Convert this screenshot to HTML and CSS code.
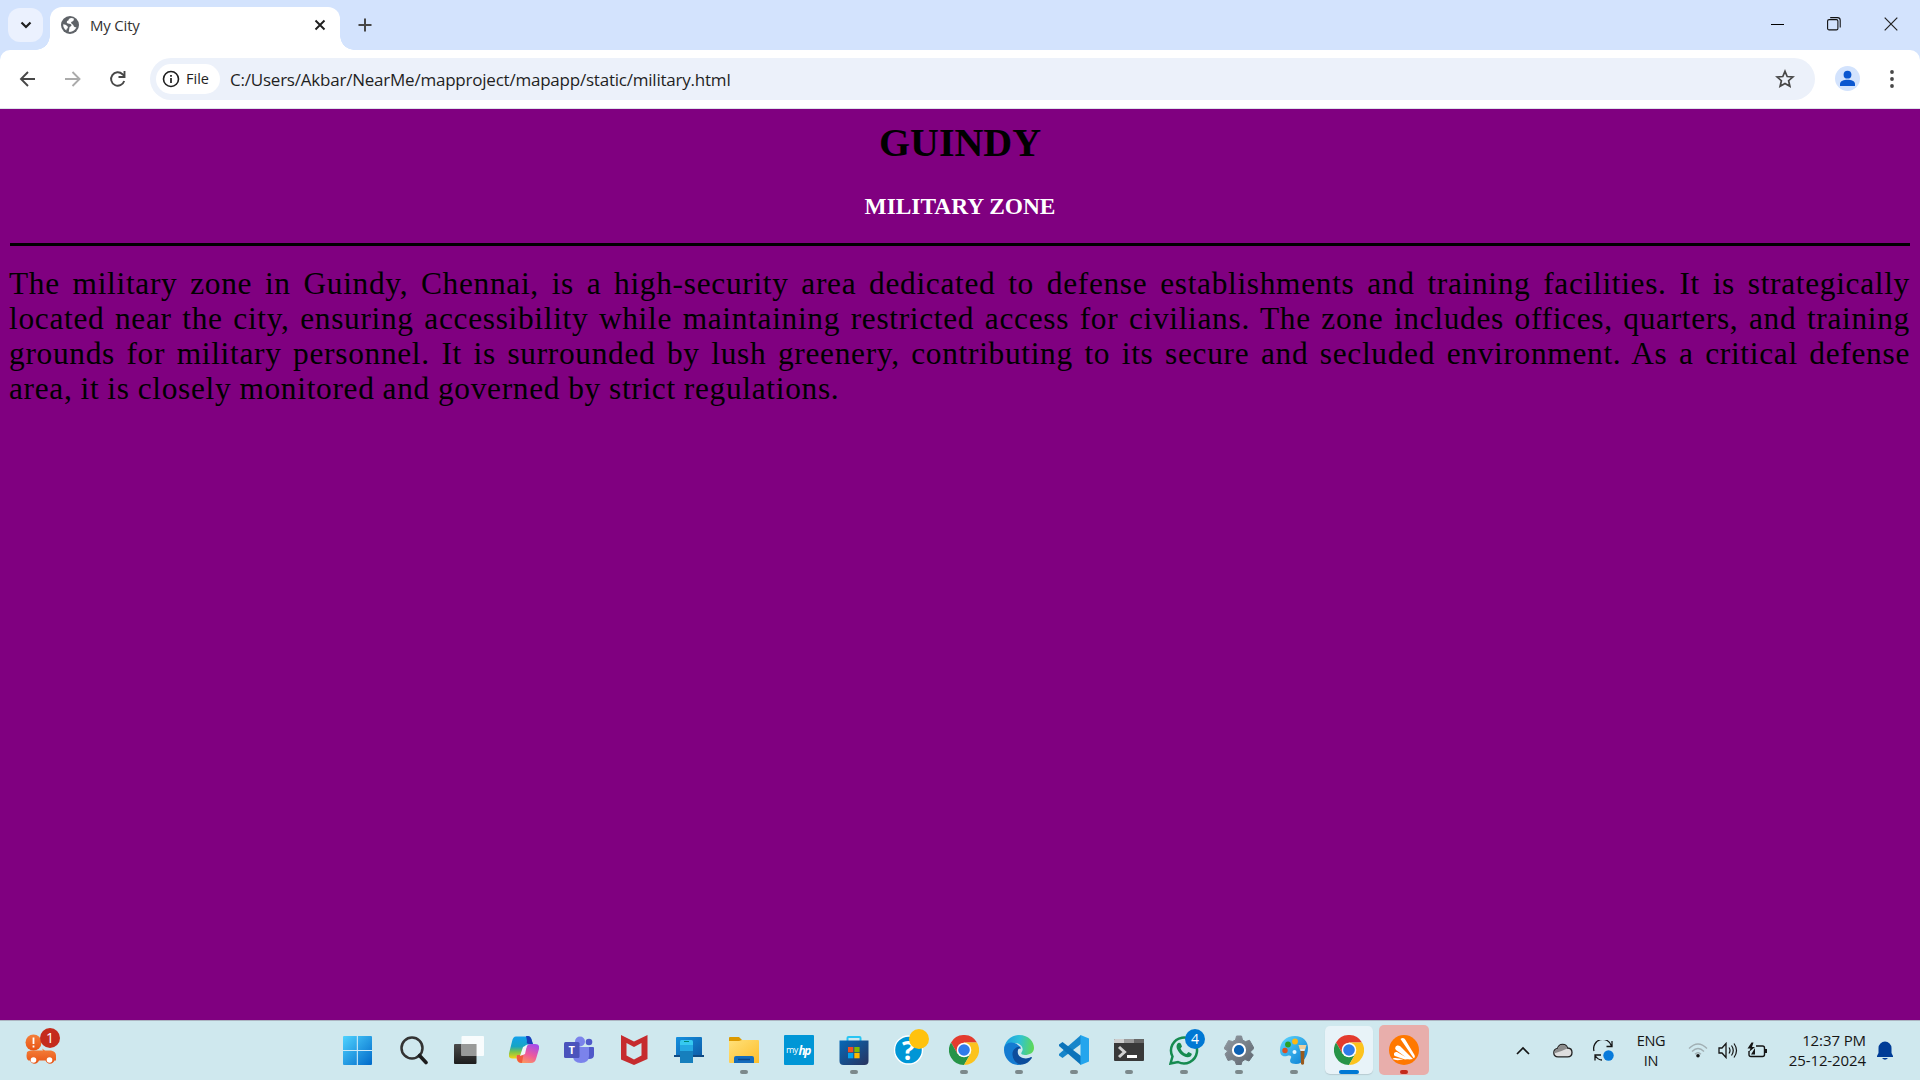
FILE: index.html
```
<!DOCTYPE html>
<html lang="en">
<head>
<meta charset="utf-8">
<title>My City</title>
<link rel="stylesheet" href="styles.css">
</head>
<body>
<svg class="defs" width="0" height="0" aria-hidden="true">
  <defs>
    <linearGradient id="win" x1="0" y1="0" x2="1" y2="1"><stop offset="0" stop-color="#4fd3ff"/><stop offset="1" stop-color="#0069c9"/></linearGradient>
    <linearGradient id="dark" x1="0" y1="0" x2="0" y2="1"><stop offset="0" stop-color="#4b4b4b"/><stop offset="1" stop-color="#1d1d1d"/></linearGradient>
    <linearGradient id="copA" x1="0" y1="0" x2="0" y2="1"><stop offset="0" stop-color="#12a0ec"/><stop offset=".45" stop-color="#16a4c4"/><stop offset=".7" stop-color="#7bc34b"/><stop offset="1" stop-color="#f5d414"/></linearGradient>
    <linearGradient id="copB" x1=".7" y1="0" x2=".2" y2="1"><stop offset="0" stop-color="#a64ce8"/><stop offset=".5" stop-color="#ee5a9c"/><stop offset="1" stop-color="#fda057"/></linearGradient>
    <linearGradient id="folder" x1="0" y1="0" x2="1" y2="1"><stop offset="0" stop-color="#ffe17a"/><stop offset="1" stop-color="#fdbe2b"/></linearGradient>
    <linearGradient id="blue" x1="0" y1="0" x2="1" y2="1"><stop offset="0" stop-color="#1490df"/><stop offset="1" stop-color="#0d5ba6"/></linearGradient>
    <linearGradient id="store" x1="0" y1="0" x2="1" y2="1"><stop offset="0" stop-color="#0669b8"/><stop offset="1" stop-color="#29335e"/></linearGradient>
    <linearGradient id="edgeTop" x1="0" y1=".4" x2="1" y2=".5"><stop offset="0" stop-color="#1b9de2"/><stop offset=".5" stop-color="#2fc2d5"/><stop offset="1" stop-color="#5fd953"/></linearGradient>
    <linearGradient id="paint" x1="0" y1="0" x2="1" y2="1"><stop offset="0" stop-color="#5dd8ff"/><stop offset="1" stop-color="#087bd1"/></linearGradient>
    <linearGradient id="gear" x1="0" y1="0" x2="1" y2="1"><stop offset="0" stop-color="#939ba3"/><stop offset="1" stop-color="#5d656e"/></linearGradient>
    <linearGradient id="car" x1="0" y1="0" x2="0" y2="1"><stop offset="0" stop-color="#f4803b"/><stop offset="1" stop-color="#e85414"/></linearGradient>
    <symbol id="chrome" viewBox="0 0 30 30">
      <path d="M2 7.500A15 15 0 0 1 28 7.500H15L8.500 18.750Z" fill="#e33b2e"/>
      <path d="M2 7.500A15 15 0 0 0 15 30L21.500 18.750H8.500Z" fill="#269447"/>
      <path d="M28 7.500A15 15 0 0 1 15 30L21.500 18.750 15 7.500Z" fill="#fcc31e"/>
      <circle cx="15" cy="15" r="7.300" fill="#fff"/><circle cx="15" cy="15" r="5.800" fill="#2f7bea"/>
    </symbol>
  </defs>
</svg>

<header class="browser">
  <div class="tabstrip">
    <button class="tab-search" aria-label="Search tabs"><svg width="14" height="14" viewBox="0 0 14 14"><path d="M2.500 4.500 7 9l4.500-4.500" fill="none" stroke="#1f1f1f" stroke-width="2.200"/></svg></button>
    <div class="tab">
      <svg width="18" height="18" viewBox="0 0 18 18"><circle cx="9" cy="9" r="9" fill="#5f6368"/><path d="M10.500 1.900C8.500 2 7.500 3 7.400 4.500 5.800 4.700 5.500 6 6 7c1 1.100 3.500.4 4.200 1.400.8 1.100-.2 2-1.600 2.600l-.9 4.800c3.400.5 6.700-1.500 7.800-4.700-1.500.6-2.700-.2-3-1.500-.3-1.400-1.800-1.500-2.300-2.600-.5-1.200 1-1.400 1.900-2 .9-.7.800-1.500.6-2.500ZM2.200 8.200c1.500 0 3.300.7 4.300 2 .7 1 .4 2.300-.8 2.500l-.4 1.700C3.200 13.200 2 10.800 2.200 8.200Z" fill="#fff"/></svg>
      <span class="tab-title">My City</span>
      <svg class="tab-close" width="12" height="12" viewBox="0 0 12 12"><path d="M1.500 1.500l9 9m0-9l-9 9" stroke="#1f1f1f" stroke-width="1.900"/></svg>
    </div>
    <svg class="new-tab" width="14" height="14" viewBox="0 0 14 14"><path d="M7 .5v13M.5 7h13" stroke="#474747" stroke-width="2"/></svg>
    <div class="window-controls">
      <svg width="13" height="14" viewBox="0 0 13 14"><path d="M0 7.500h13" stroke="#000"/></svg>
      <svg width="14" height="14" viewBox="0 0 14 14" fill="none" stroke="#111" stroke-width="1.100"><rect x=".6" y="2.600" width="10.300" height="10.300" rx="1.500"/><path d="M3.200.6h7.300q2.700 0 2.700 2.700v7.200"/></svg>
      <svg width="14" height="14" viewBox="0 0 14 14"><path d="M.7.700l12.600 12.600m0-12.600L.7 13.300" stroke="#222" stroke-width="1.200"/></svg>
    </div>
  </div>
  <div class="toolbar">
    <nav class="nav">
      <svg width="18" height="18" viewBox="0 0 18 18"><path d="M16 9H2.500M9 2 2 9l7 7" fill="none" stroke="#474747" stroke-width="1.900"/></svg>
      <svg width="18" height="18" viewBox="0 0 18 18"><path d="M1 9h14M8.500 2l7 7-7 7" fill="none" stroke="#ababab" stroke-width="1.900"/></svg>
      <svg width="18" height="18" viewBox="0 0 18 18"><path d="M15.200 11A6.700 6.700 0 1 1 13.500 4.200L15 5.500M15.500 1v6h-6" fill="none" stroke="#474747" stroke-width="1.900"/></svg>
    </nav>
    <div class="omnibox">
      <div class="chip"><svg width="18" height="18" viewBox="0 0 18 18"><circle cx="9" cy="9" r="7.500" fill="none" stroke="#1f1f1f" stroke-width="1.600"/><path d="M9 8v5M9 5v1.700" stroke="#1f1f1f" stroke-width="1.700"/></svg><span>File</span></div>
      <span class="url">C:/Users/Akbar/NearMe/mapproject/mapapp/static/military.html</span>
      <svg class="star" width="20" height="20" viewBox="0 0 20 20"><path d="M10 2.300l2.200 5.200 5.700.5-4.300 3.700 1.300 5.600L10 14.400l-4.900 2.900 1.300-5.600L2.100 8l5.700-.5Z" fill="none" stroke="#474747" stroke-width="1.700"/></svg>
    </div>
    <svg class="avatar" width="25" height="25" viewBox="0 0 25 25"><circle cx="12.500" cy="12.500" r="12.500" fill="#d3e3fd"/><circle cx="12.500" cy="8.700" r="3.900" fill="#0b57d0"/><path d="M5 20v-2c0-3 4-4.200 7.500-4.200s7.500 1.200 7.500 4.200v2Z" fill="#0b57d0"/></svg>
    <svg class="menu" width="4" height="18" viewBox="0 0 4 18" fill="#474747"><circle cx="2" cy="2" r="1.900"/><circle cx="2" cy="9" r="1.900"/><circle cx="2" cy="16" r="1.900"/></svg>
  </div>
</header>

<main class="page">
  <h1>GUINDY</h1>
  <h3>MILITARY ZONE</h3>
  <hr>
  <p>
    <span class="line">The military zone in Guindy, Chennai, is a high-security area dedicated to defense establishments and training facilities. It is strategically</span>
    <span class="line">located near the city, ensuring accessibility while maintaining restricted access for civilians. The zone includes offices, quarters, and training</span>
    <span class="line">grounds for military personnel. It is surrounded by lush greenery, contributing to its secure and secluded environment. As a critical defense</span>
    <span class="line last">area, it is closely monitored and governed by strict regulations.</span>
  </p>
</main>

<footer class="taskbar">
  <div class="widget">
    <svg width="36" height="38" viewBox="0 0 36 38"><path d="M4 24q1.500-1.500 4-1.500h12l-1-2 3 2h6q5 1 5 5v5h-1.500a4.800 4.800 0 0 1-9 0H16a4.800 4.800 0 0 1-9 0H5.500q-2-1-2-5Z" fill="url(#car)"/><circle cx="10.500" cy="32" r="2.800" fill="#fff"/><circle cx="26.500" cy="32" r="2.800" fill="#fff"/><circle cx="10.500" cy="14.500" r="8" fill="url(#car)"/><path d="M10.500 9.500v6.500M10.500 17.500v2" stroke="#fff" stroke-width="1.800"/></svg>
    <span class="badge red">1</span>
  </div>
  <div class="apps">
    <div class="app start"><svg viewBox="0 0 30 30"><path d="M2 1h13v14H1V2q0-1 1-1ZM15.500 1H29q1 0 1 1v13H15.500ZM1 15.500h14V30H2q-1 0-1-1ZM15.500 15.500H30V29q0 1-1 1H15.500Z" fill="url(#win)"/><path d="M15.300 1v29M1 15.500h29" stroke="#cdeaf8" stroke-width="1"/></svg></div>
    <div class="app"><svg viewBox="0 0 30 30"><circle cx="13" cy="13" r="10.500" fill="none" stroke="#333" stroke-width="2.500"/><path d="m20.500 20.500 6.500 7" stroke="#1c1c1c" stroke-width="3.600" stroke-linecap="round"/></svg></div>
    <div class="app"><svg viewBox="0 0 30 30"><rect x="0" y="9" width="22.500" height="20" rx="1" fill="url(#dark)"/><rect x="7.500" y="1" width="22.500" height="20" rx="1" fill="#fff" fill-opacity=".86"/><path d="M7.500 9h15v12h-15Z" fill="#989a99"/></svg></div>
    <div class="app"><svg viewBox="0 0 30 30"><path d="M7 1.500h12q3 0 4 5l1 3h-5q-3 0-4 4l-2 7q-1 3-4 3H3q-4 0-3-5l3-12q1-5 4-5Z" fill="url(#copA)"/><path d="M17 1h2q3 0 4 5l1 3h-4q-3 0-2-3Z" fill="#183dba"/><path d="M24 9h2q5 0 4 5l-3 10q-1 4-5 4H12q-3 0-4-3l-1-4h4q3 0 4-3l3-7q1-2 4-2Z" fill="url(#copB)"/><path d="M8 20h5q2 0 1 2l-1 6q-4 0-5-4Z" fill="#f15b3d"/><path d="m14 12 4-2-2 9-5 2Z" fill="#eef7fa"/></svg></div>
    <div class="app"><svg viewBox="0 0 30 30"><circle cx="25" cy="7" r="3.300" fill="#5059c9"/><path d="M20 12h9q1 0 1 1v7q0 4-5 4h-4Z" fill="#5059c9"/><circle cx="16" cy="6.500" r="5" fill="#7b83eb"/><path d="M9 12h16v9q0 7-8 7-8 0-8-7Z" fill="#7b83eb"/><rect x="0" y="7" width="15.500" height="16" rx="1.500" fill="#4b53bc"/><text x="7.800" y="19" text-anchor="middle" class="teams-t">T</text></svg></div>
    <div class="app"><svg viewBox="0 0 30 30"><path d="M2 0 15 6.500 28.500 0v24L15 30 2 24.500Z" fill="#c62b2e"/><path d="m7.500 8 7.500 4 7.500-4v12.500L15 24.500l-7.500-4Z" fill="#cfe8ee"/></svg></div>
    <div class="app"><svg viewBox="0 0 30 30"><rect x="2" y="2" width="26" height="20" rx="1" fill="url(#blue)"/><path d="M0 20h30v2H0Z" fill="#104a83"/><rect x="6" y="5" width="13" height="23" rx="1.500" fill="#36c9f0"/><path d="M6 10h13v6H6Z" fill="#24a9e3"/><path d="M6 16h13v12H6Z" fill="#167fbd"/><path d="M10 6.500h5" stroke="#087"/></svg></div>
    <div class="app run"><svg viewBox="0 0 30 30"><path d="M0 3q0-1 1-1h9l3 3v5H0Z" fill="#dc9900"/><path d="M0 6h10l3-1h16q1 0 1 1v22H1q-1 0-1-1Z" fill="url(#folder)"/><path d="M5 28v-5q0-2 2-2h16q2 0 2 2v5Z" fill="#146cbd"/><path d="M9 24.500h12" stroke="#0b4687" stroke-width="1.500"/></svg></div>
    <div class="app"><svg viewBox="0 0 30 30"><rect width="30" height="30" rx="1" fill="#0096d6"/><text x="2" y="18" class="my">my</text><text x="14.500" y="19.500" class="hp">hp</text></svg></div>
    <div class="app run"><svg viewBox="0 0 30 30"><path d="M8.500 8V3q0-1 1-1h11q1 0 1 1v5" fill="none" stroke="#28c5f3" stroke-width="2"/><path d="M.5 5.500h29V26q0 4-4 4h-21q-4 0-4-4Z" fill="url(#store)"/><path d="M9 12h5.300v5.300H9Z" fill="#f25022"/><path d="M15.300 12h5.300v5.300h-5.300Z" fill="#7fba00"/><path d="M9 18h5.300v5.300H9Z" fill="#00a4ef"/><path d="M15.300 18h5.300v5.300h-5.300Z" fill="#ffb900"/></svg></div>
    <div class="app"><svg viewBox="0 0 30 30"><circle cx="14.500" cy="15" r="14" fill="#0096d6" stroke="#fff" stroke-width="1.400"/><text x="14.500" y="25" text-anchor="middle" class="question">?</text></svg><span class="badge yellow"></span></div>
    <div class="app run"><svg><use href="#chrome"/></svg></div>
    <div class="app run"><svg viewBox="0 0 30 30"><path d="M0 16A15 15 0 0 1 15 0C25 0 30 7 30 13c0 5-5 7-9 7-3 0-4.500-1-3.500-2.500C21 13 16 8 10.500 8 5 8 0 12 0 16Z" fill="url(#edgeTop)"/><path d="M0 15C0 9 5 6 10.500 8c3.500 1.400 5.500 3 6.500 6-5-1.500-8 2-7 7 1 4 4 7.500 8 8.500C8 32 0 24 0 15Z" fill="#147bd1"/><path d="M17 12c-5-1-9 3-8.500 8 .4 6 5.500 10 10 9.500 4-.4 7-3 9.200-6.200.7-1-.2-1.500-1.200-1C22 25 12 23 14 15c.5-2 2-2.500 3-3Z" fill="#0c4d9c"/></svg></div>
    <div class="app run"><svg viewBox="0 0 30 30"><path d="M22 0v9L3.500 23 0 20.500v-1.500Z" fill="#1685ca"/><path d="M22 30v-9L3.500 7 0 9.500V11Z" fill="#0b73ba"/><path d="M21.500 0 30 3.500v23L21.500 30Z" fill="#24a5ed"/></svg></div>
    <div class="app run"><svg viewBox="0 0 30 30"><rect y="4" width="30" height="22" rx="1" fill="#393939"/><path d="M0 8V5q0-1 1-1h9v4Z" fill="#cecece"/><path d="M10 4h10v4H10Z" fill="#9a9a9a"/><path d="M20 4h9q1 0 1 1v3H20Z" fill="#666"/><path d="m5 12 5.500 5L5 22" fill="none" stroke="#d1d1d1" stroke-width="3"/><path d="M13 21.500h10" stroke="#fff" stroke-width="3"/></svg></div>
    <div class="app run"><svg viewBox="0 0 30 30"><path d="M1.500 28.500l2-7A13 13 0 1 1 9 27Z" fill="none" stroke="#168b50" stroke-width="2.500"/><path d="M9 8q2-1 3 1l1 2.500-1.500 2c1.500 3 3 4.500 6 5.500l2-2 3 1.500q1 1-1 3c-3 2-7 0-10-2.500C8 15 6 11 9 8Z" fill="#168b50"/></svg><span class="badge blue">4</span></div>
    <div class="app run"><svg viewBox="0 0 30 30"><path d="m11.500 5 1-4h5l1 4 3 1.600 4-1.300 4.500 8-3.700 3.700 3 3-4.300 6-4-1.500-3 2-1 3.500h-4.500l-1.500-4-3-1.500-4 1L1 19l2.700-3L0 13.500 4.500 5.500l4 1Z" fill="url(#gear)" stroke="url(#gear)" stroke-width="1" stroke-linejoin="round"/><circle cx="15" cy="15" r="6.100" fill="#0d61b4" stroke="#fff" stroke-width="2"/></svg></div>
    <div class="app run"><svg viewBox="0 0 30 30"><path d="M16 1c8 0 13 5 13 12 0 8-5 16-12 16-6 0-7-3-5-6 1-2-1-3-4-2-5 1-7-1-7-6C1 7 7 1 16 1Z" fill="url(#paint)"/><circle cx="16" cy="6.500" r="2.900" fill="#fdb813"/><circle cx="9" cy="9.500" r="2.900" fill="#2aa128"/><circle cx="6" cy="15.500" r="2.700" fill="#d95023"/><circle cx="15.500" cy="17" r="2" fill="#e5f7ff"/><path d="M19.500 10h8l-1.500 5h-5Z" fill="#edcf9d"/><path d="M21.300 14h4.400v2h-4.400Z" fill="#e9e9e9"/><path d="M21.500 16h4l-.5 13q-1.500 1.500-3 0Z" fill="#995a1d"/></svg></div>
    <div class="app run active"><svg><use href="#chrome"/></svg></div>
    <div class="app run alert"><svg viewBox="0 0 30 30"><circle cx="15" cy="15" r="15" fill="#ff7800"/><path d="M11.500 4c2-2 4-1 5 1l9 15q1 3-1 3ZM6.500 12c1-2 3-2 5-.5L24 24l-4 .500L7 15q-1.500-1.500-.5-3ZM5 18.500q.5-2 3-1.500l12 7-4 .5-10-3.500q-1.500-.5-1-2.500ZM3.500 24q1-1.500 3-1l8 1.300-4 .7q-4 .5-7-1Z" fill="#fff"/></svg></div>
  </div>
  <div class="tray">
    <svg class="chev" width="14" height="9" viewBox="0 0 14 9"><path d="m1 8 6-6 6 6" fill="none" stroke="#151515" stroke-width="1.700"/></svg>
    <svg class="cloud" width="20" height="15" viewBox="0 0 20 15"><path d="M5 13.800C-.5 13.800-.5 6.500 4.500 5.500 6 0 13 0 14.500 5c6 .2 6 8.800 0 8.800Z" fill="#dedede" stroke="#222" stroke-width="1.300"/><path d="M1.200 10C1 7 3 5.800 4.700 5.700 6 .5 13 .5 14.300 5.500L8.500 8l-6 2Z" fill="#8c8c8c"/></svg>
    <svg class="sync" width="21" height="21" viewBox="0 0 21 21"><path d="M1 11A9 9 0 0 1 18.500 6M19 1v5.500h-5.500M9 20C6 20 4 18.500 2 15.500M2 20.500V15h6" fill="none" stroke="#151515" stroke-width="1.300"/><circle cx="15.500" cy="15.500" r="5.200" fill="#087bdb"/></svg>
    <div class="lang">ENG<br>IN</div>
    <svg class="wifi" width="20" height="15" viewBox="0 0 20 15"><path d="M1 5.500q9-9 18 0M4 8.500q6-6 12 0M7 11.200q3-3 6 0" fill="none" stroke="#a1afb3" stroke-width="1.300"/><circle cx="10" cy="12.700" r="1.800" fill="#151515"/></svg>
    <svg class="sound" width="20" height="17" viewBox="0 0 20 17"><path d="M1 6h3l4-4.500v14L4 11H1Z" fill="none" stroke="#151515" stroke-width="1.300"/><path d="M11 5.500q2 3 0 6M13.500 3.500q3.500 5 0 10M16 1.500q5 7 0 14" fill="none" stroke="#151515" stroke-width="1.200"/></svg>
    <svg class="battery" width="21" height="17" viewBox="0 0 21 17"><path d="M9 4h6.500q2 0 2 2v6.500q0 2-2 2H4q-2 0-2-2V9" fill="none" stroke="#151515" stroke-width="1.400"/><path d="M18 7h2v4h-2Z" fill="#151515"/><path d="M8 6v6.500H4Z" fill="#151515"/><path d="m4.500.500-4 6h3L2 10l6-5H5l1.500-4.500Z" fill="#151515"/></svg>
    <div class="clock">12:37 PM<br>25-12-2024</div>
    <svg class="bell" width="16" height="19" viewBox="0 0 16 19"><path d="M0 16v-1l1.500-3V7A6.500 6.500 0 0 1 14.500 7v5L16 15v1ZM5 17h6q-3 3.500-6 0Z" fill="#003c96"/></svg>
  </div>
</footer>
</body>
</html>
```
FILE: styles.css
```
* { box-sizing: border-box; }
body {
  margin: 0;
  width: 1920px;
  height: 1080px;
  overflow: hidden;
  display: flex;
  flex-direction: column;
  background: #800080;
  font-family: "Open Sans", "Noto Sans", sans-serif;
}
svg { display: block; flex: none; }
.defs { position: absolute; }

.browser { height: 109px; background: #d3e3fd; }
.tabstrip { height: 50px; display: flex; align-items: flex-start; padding-left: 8px; }
.tab-search {
  width: 35px; height: 34px; margin: 8px 7px 0 0; padding: 0;
  display: grid; place-items: center;
  border: 0; border-radius: 12px; background: #ebf1fe;
}
.tab {
  position: relative;
  width: 290px; height: 43px; margin-top: 7px; padding: 0 14px 7px 11px;
  display: flex; align-items: center;
  background: #fff; border-radius: 12px 12px 0 0;
}
.tab::before, .tab::after {
  content: ""; position: absolute; bottom: 0; width: 14px; height: 14px;
}
.tab::before { left: -14px; background: radial-gradient(circle at 0 0, transparent 13.5px, #fff 14px); }
.tab::after { right: -14px; background: radial-gradient(circle at 100% 0, transparent 13.5px, #fff 14px); }
.tab-title { margin-left: 11px; font-size: 15px; letter-spacing: -.2px; color: #333; }
.tab-close { margin-left: auto; }
.new-tab { margin: 18px 0 0 18px; }
.window-controls { margin: 17px 22px 0 auto; display: flex; gap: 44px; }
.window-controls svg:first-child { margin-right: -1px; }
.window-controls svg:last-child { margin-left: -1px; }

.toolbar {
  height: 59px; display: flex; align-items: center;
  padding: 0 26px 1px 19px;
  background: #fff; border-radius: 10px 10px 0 0; border-bottom: 1px solid #dde3ea;
}
.nav { display: flex; gap: 27px; width: 131px; }
.omnibox {
  width: 1665px; height: 42px; padding: 0 20px 0 6px;
  display: flex; align-items: center;
  background: #ecf1fa; border-radius: 21px;
}
.chip {
  width: 64px; height: 30px; padding-left: 6px;
  display: flex; align-items: center; gap: 6px;
  background: #fff; border-radius: 15px;
  font-size: 14.500px; color: #1f1f1f;
}
.url { margin-left: 10px; padding-top: 1px; font-size: 17px; letter-spacing: -.22px; color: #1f1f1f; white-space: nowrap; }
.star { margin-left: auto; }
.avatar { margin-left: 20px; }
.menu { margin-left: auto; }

.page {
  flex: 1; padding: 11px 10px 10px;
  font-family: "Liberation Serif", serif; color: #000; text-align: center;
}
h1 { margin: 0; font-size: 40px; line-height: 46px; }
h3 { margin: 27px 0 0; font-size: 23.4px; line-height: 26px; color: #fff; }
hr { margin: 24px 0 0; border: 0; height: 3px; background: #000; }
p { margin: 20px 0 0; font-size: 31.4px; line-height: 35px; }
.line { display: block; height: 35px; white-space: nowrap; text-align: justify; text-align-last: justify; letter-spacing: .68px; margin-left: -1px; }
.last { text-align-last: left; word-spacing: -.5px; }

.taskbar {
  height: 60px; display: flex; background: #cfe8ee;
  border-top: 1px solid #adb5c2; color: #151515;
}
.widget { position: relative; width: 329px; padding: 7px 0 0 23px; }
.badge {
  position: absolute; width: 20px; height: 20px; border-radius: 50%;
  display: grid; place-items: center; font-size: 14px; line-height: 20px; color: #fff;
}
.red { left: 40px; top: 7px; background: #c42b1c; }
.apps { display: flex; }
.app { position: relative; width: 55px; height: 59px; padding: 14px 0 0 13px; }
.app svg { width: 30px; height: 30px; }
.start { width: 57px; }
.run::after {
  content: ""; position: absolute; left: 24px; top: 49px;
  width: 8px; height: 4px; border-radius: 2px; background: #7c898c;
}
.yellow { left: 28px; top: 8px; background: #ffc20e; }
.blue { left: 29px; top: 8px; background: #0078d4; }
.active, .alert { isolation: isolate; }
.active::before, .alert::before {
  content: ""; position: absolute; z-index: -1; left: 4px; top: 5px; width: 48px; height: 48px;
  border-radius: 5px; background: #e8f3f8; box-shadow: 0 1px 1px #b7cbd1;
}
.alert::before { left: 3px; top: 4px; width: 50px; height: 50px; background: #e8aeab; box-shadow: none; }
.active::after { left: 18px; width: 20px; background: #0078d4; }
.alert::after { background: #c42b1c; }
.teams-t { font: bold 11px "Open Sans", sans-serif; fill: #fff; }
.my { font: 9px "Open Sans", sans-serif; letter-spacing: -.5px; fill: #fff; }
.hp { font: italic bold 12px "Open Sans", sans-serif; letter-spacing: -1.5px; fill: #fff; }
.question { font: bold 27px "Open Sans", sans-serif; fill: #fff; }

.tray { flex: 1; display: flex; align-items: center; padding-bottom: 1px; font-size: 15px; line-height: 20px; }
.chev { margin-left: 85px; }
.cloud { margin-left: 23px; }
.sync { margin-left: 20px; }
.lang { width: 38px; margin-left: 18px; padding-top: 1px; text-align: center; font-size: 14.5px; letter-spacing: -.3px; }
.wifi { margin-left: 18px; }
.sound { margin-left: 10px; }
.battery { margin-left: 9px; }
.clock { width: 98px; text-align: right; white-space: nowrap; font-size: 15px; letter-spacing: -.1px; }
.bell { margin-left: 11px; }
```
